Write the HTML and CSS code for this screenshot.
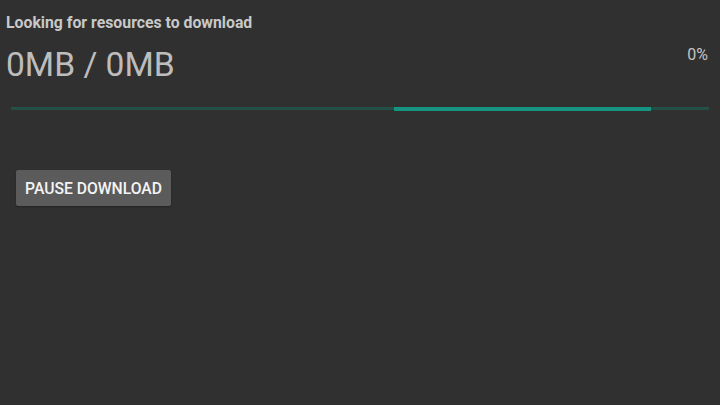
FILE: index.html
```html
<!DOCTYPE html>
<html>
<head>
<meta charset="utf-8">
<link rel="stylesheet" href="styles.css">
</head>
<body>
<div class="page">
  <div class="title">Looking for resources to download</div>
  <div class="row">
    <div class="size">0MB / 0MB</div>
    <div class="pct">0%</div>
  </div>
  <div class="track"><div class="bar"></div></div>
  <button class="btn">PAUSE DOWNLOAD</button>
</div>
</body>
</html>
```
FILE: styles.css
```css
html, body {
  margin: 0;
  padding: 0;
  background: #303030;
  width: 720px;
  height: 405px;
  overflow: hidden;
  font-family: Roboto, "Noto Sans", sans-serif;
}
.page {
  padding: 13px 11px 0 6px;
  display: flex;
  flex-direction: column;
}
.title {
  font-size: 15.8px;
  font-weight: 700;
  color: #c8c8c8;
  line-height: 20px;
}
.row {
  display: flex;
  justify-content: space-between;
  align-items: flex-start;
  margin-top: 12px;
}
.size {
  font-size: 33.6px;
  color: #bdbdbd;
  line-height: 40px;
  font-weight: 400;
}
.pct {
  font-size: 16px;
  color: #c4c4c4;
  line-height: 20px;
  margin-right: 1px;
}
.track {
  margin: 22px 0 0 5px;
  height: 3px;
  background: #234f47;
  position: relative;
}
.bar {
  position: absolute;
  left: 383px;
  width: 257px;
  top: 0;
  height: 4px;
  background: #159482;
}
.btn {
  align-self: flex-start;
  margin: 60px 0 0 10px;
  width: 155px;
  height: 36px;
  background: #5b5b5b;
  border: none;
  border-radius: 2px;
  color: #f4f4f4;
  font-family: Roboto, sans-serif;
  font-size: 15.7px;
  font-weight: 500;
  padding: 0;
  box-shadow: 0 1px 2px rgba(0,0,0,0.3);
}
```
